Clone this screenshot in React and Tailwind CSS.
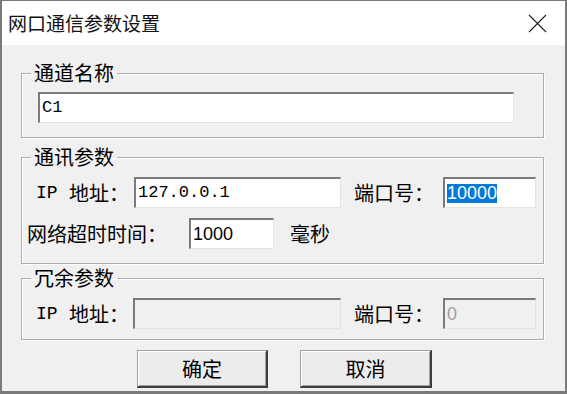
import React from 'react';

const cjk = "font-['Noto_Sans_CJK_SC',sans-serif]";

const Field = ({ w, children, disabled, className = '' }) => (
  <div
    className={`h-[31px] ${w} flex items-center pl-[2px] border-t-2 border-l-2 border-t-[#7a7a7a] border-l-[#7a7a7a] border-b border-r border-b-[#e3e3e3] border-r-[#e3e3e3] ${
      disabled ? 'bg-[#f0f0f0]' : 'bg-white'
    } ${className}`}
  >
    {children}
  </div>
);

const GroupBox = ({ title, h, className = '', children }) => (
  <fieldset
    className={`ml-[19px] w-[523px] ${h} border border-[#adadad] shadow-[inset_1px_1px_0_#fff,1px_1px_0_#fff] ${className}`}
  >
    <legend className={`ml-[9px] px-[3px] text-[20px] leading-[20px] text-black ${cjk}`}>{title}</legend>
    {children}
  </fieldset>
);

const IpLabel = ({ w }) => (
  <div className={`${w} shrink-0 flex items-center text-[20px] leading-[20px] text-black`}>
    <span className="font-['Liberation_Mono',monospace] text-[18px] w-[33px]">IP</span>
    <span className={cjk}>地址：</span>
  </div>
);

const Button = ({ children, w }) => (
  <button
    className={`${w} h-[38px] bg-[#ececec] border-t border-l border-t-[#a0a0a0] border-l-[#a0a0a0] border-b-2 border-r-2 border-b-[#3c3c3c] border-r-[#3c3c3c] shadow-[inset_1px_1px_0_#fff,inset_-1px_-1px_0_#a0a0a0] text-[20px] leading-[20px] text-black ${cjk}`}
  >
    {children}
  </button>
);

export default function App() {
  return (
    <div className="w-[567px] h-[394px] flex flex-col bg-[#f0f0f0] border-t border-x-2 border-b-[3px] border-[#7a7a7a] overflow-hidden">
      {/* title bar */}
      <div className="h-[44px] shrink-0 bg-white flex items-center justify-between pl-[6px] pr-[18px]">
        <span className={`text-[19px] leading-[22px] text-[#111] ${cjk}`}>网口通信参数设置</span>
        <svg width="19" height="19" viewBox="0 0 19 19" className="mt-[1px]">
          <path d="M1 1 L18 18 M18 1 L1 18" stroke="#222" strokeWidth="1.1" fill="none" />
        </svg>
      </div>

      {/* client */}
      <div className="flex-1 flex flex-col">
        <GroupBox title="通道名称" h="h-[75px]" className="mt-[18px]">
          <div className="pt-[9px] pl-[16px]">
            <Field w="w-[476px]">
              <span className="font-['Liberation_Mono',monospace] text-[17px] leading-[20px] text-black">C1</span>
            </Field>
          </div>
        </GroupBox>

        <GroupBox title="通讯参数" h="h-[117px]" className="mt-[9px]">
          <div className="pt-[10px] flex flex-col gap-[10px]">
            <div className="flex items-center pl-[14px]">
              <IpLabel w="w-[98px]" />
              <Field w="w-[207px]">
                <span className="font-['Liberation_Mono',monospace] text-[17px] leading-[20px] text-black">127.0.0.1</span>
              </Field>
              <span className={`ml-[13px] w-[89px] shrink-0 text-[20px] leading-[20px] text-black ${cjk}`}>端口号：</span>
              <Field w="w-[93px]">
                <span className="font-['Liberation_Sans',sans-serif] text-[18px] leading-[19px] bg-[#0078d7] text-white">10000</span>
              </Field>
            </div>
            <div className="flex items-center pl-[5px]">
              <span className={`w-[162px] shrink-0 text-[20px] leading-[20px] text-black ${cjk}`}>网络超时时间：</span>
              <Field w="w-[85px]">
                <span className="font-['Liberation_Sans',sans-serif] text-[18px] leading-[20px] text-black">1000</span>
              </Field>
              <span className={`ml-[16px] text-[20px] leading-[20px] text-black ${cjk}`}>毫秒</span>
            </div>
          </div>
        </GroupBox>

        <GroupBox title="冗余参数" h="h-[72px]" className="mt-[4px]">
          <div className="pt-[10px] flex items-center pl-[14px]">
            <IpLabel w="w-[97px]" />
            <Field w="w-[208px]" disabled />
            <span className={`ml-[13px] w-[89px] shrink-0 text-[20px] leading-[20px] text-black ${cjk}`}>端口号：</span>
            <Field w="w-[93px]" disabled>
              <span className="font-['Liberation_Sans',sans-serif] text-[18px] leading-[20px] text-[#a0a0a0]">0</span>
            </Field>
          </div>
        </GroupBox>

        <div className="mt-[10px] flex pl-[135px] gap-[32px]">
          <Button w="w-[131px]">确定</Button>
          <Button w="w-[132px]">取消</Button>
        </div>
      </div>
    </div>
  );
}
